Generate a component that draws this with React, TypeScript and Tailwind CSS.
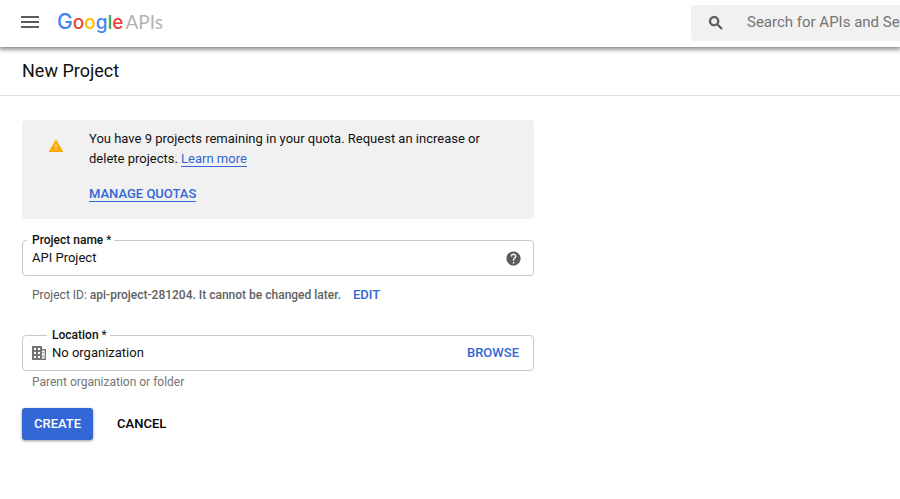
import type { ReactNode } from "react";

const LOGO_LETTERS = [
  { char: "G", color: "text-[21px] text-[#4285f4]" },
  { char: "o", color: "text-[#ea4335]" },
  { char: "o", color: "text-[#fbbc05]" },
  { char: "g", color: "text-[#4285f4]" },
  { char: "l", color: "text-[#34a853]" },
  { char: "e", color: "text-[#ea4335]" },
];

function Icon({ d, className }: { d: string; className: string }) {
  return (
    <svg viewBox="0 0 24 24" fill="currentColor" className={className} aria-hidden="true">
      <path d={d} />
    </svg>
  );
}

function BuildingIcon() {
  return (
    <svg viewBox="0 0 14 14" fill="currentColor" fillRule="evenodd" className="mr-[6px] h-[14px] w-[14px] shrink-0 text-[#757575]" aria-hidden="true">
      <path d="M0 0h10v3h4v11H0V0zM2 2v2h2V2H2zm4 0v2h2V2H6zM2 6v2h2V6H2zm4 0v2h2V6H6zM2 10v2h2v-2H2zm4 0v2h2v-2H6zM10 4.5v8h2.7v-8H10z" />
      <path d="M10.5 6h1.2v1.6h-1.2zM10.5 9.4h1.2V11h-1.2z" />
    </svg>
  );
}

function Header() {
  return (
    <header className="relative flex h-[47px] items-center bg-white pb-[3px] shadow-[0_1px_5px_1px_rgba(0,0,0,0.55)]">
      <button type="button" aria-label="Main menu" className="ml-[18px] shrink-0">
        <Icon className="h-6 w-6 text-[#5f5b5b]" d="M3 18h18v-2H3v2zm0-5h18v-2H3v2zm0-7v2h18V6H3z" />
      </button>
      <a href="#" className="ml-[15px] flex shrink-0 items-baseline gap-[2px] font-['Inter',sans-serif] text-[19px] leading-6">
        <span className="font-medium">
          {LOGO_LETTERS.map((l, i) => (
            <span key={i} className={l.color}>{l.char}</span>
          ))}
        </span>
        <span className="font-['Lato',sans-serif] text-[#b3b3b3]">APIs</span>
      </a>
      <div className="mt-[2px] ml-auto flex h-9 w-[209px] items-center rounded-l-sm bg-[#f1f1f1] pl-4">
        <Icon
          className="h-[18px] w-[18px] shrink-0 stroke-current text-[#555]"
          d="M15.5 14h-.79l-.28-.27C15.41 12.59 16 11.11 16 9.5 16 5.91 13.09 3 9.5 3S3 5.91 3 9.5 5.91 16 9.5 16c1.61 0 3.09-.59 4.23-1.57l.27.28v.79l5 4.99L20.49 19l-4.99-5zm-6 0C7.01 14 5 11.99 5 9.5S7.01 5 9.5 5 14 7.01 14 9.5 11.99 14 9.5 14z"
        />
        <input
          type="text"
          aria-label="Search for APIs and Services"
          placeholder="Search for APIs and Services"
          className="ml-[22px] min-w-0 flex-1 bg-transparent pb-[2px] text-[15px] outline-none placeholder:text-[#757575]"
        />
      </div>
    </header>
  );
}

function QuotaNotice() {
  return (
    <section className="flex rounded bg-[#f1f1f1] pt-[9px] pr-8 pb-[15px] pl-[26px]">
      <Icon className="mt-[9px] h-4 w-4 shrink-0 text-[#f9ab00]" d="M1 21h22L12 2 1 21zm12-3h-2v-2h2v2zm0-4h-2v-4h2v4z" />
      <div className="ml-[25px] text-[13px] leading-5">
        <p>
          You have 9 projects remaining in your quota. Request an increase or delete projects.{" "}
          <a href="#" className="inline-block border-b border-[#3367d6] leading-[14px] text-[#3367d6]">Learn more</a>
        </p>
        <p className="mt-[15px]">
          <a href="#" className="inline-block border-b border-[#3367d6] leading-[14px] font-medium text-[#3367d6]">MANAGE QUOTAS</a>
        </p>
      </div>
    </section>
  );
}

interface FieldProps {
  id: string;
  label: string;
  value: string;
  legendClass: string;
  icon?: ReactNode;
  action: ReactNode;
}

// Outlined text field, the label sits in the notch of the border
function Field({ id, label, value, legendClass, icon, action }: FieldProps) {
  return (
    <fieldset className="min-w-0 rounded border border-[#c8c8c8] pr-[11px] pb-[7px] pl-[9px]">
      <legend className={`pr-[3px] pl-[5px] text-xs leading-4 ${legendClass}`}>
        <label htmlFor={id}>
          <span className="font-medium">{label}</span> *
        </label>
      </legend>
      <div className="flex h-5 items-center">
        {icon}
        <input id={id} defaultValue={value} className="h-[18px] min-w-0 flex-1 bg-transparent text-[13px] outline-none" />
        {action}
      </div>
    </fieldset>
  );
}

export default function App() {
  return (
    <div className="min-h-screen bg-white font-['Roboto',sans-serif] text-[#111]">
      <Header />
      <div className="border-b border-[#dedede] px-[22px] pt-3 pb-3">
        <h1 className="text-lg leading-6">New Project</h1>
      </div>
      <main className="max-w-[556px] px-[22px] pt-6">
        <QuotaNotice />

        <form className="mt-[13px]" onSubmit={(e) => e.preventDefault()}>
          <Field
            id="project-name"
            label="Project name"
            value="API Project"
            legendClass="-ml-[5px]"
            action={
              <button type="button" aria-label="Help">
                <Icon
                  className="h-[17px] w-[17px] text-[#5f5b5b]"
                  d="M12 2C6.48 2 2 6.48 2 12s4.48 10 10 10 10-4.48 10-10S17.52 2 12 2zm1 17h-2v-2h2v2zm2.07-7.75l-.9.92C13.45 12.9 13 13.5 13 15h-2v-.5c0-1.1.45-2.1 1.17-2.83l1.24-1.26c.37-.36.59-.86.59-1.41 0-1.1-.9-2-2-2s-2 .9-2 2H8c0-2.21 1.79-4 4-4s4 1.79 4 4c0 .88-.36 1.68-.93 2.25z"
                />
              </button>
            }
          />
          <p className="mt-[11px] mb-6 flex items-center pl-[10px] text-xs leading-4 text-[#616161]">
            <span>
              Project ID: <span className="font-medium">api-project-281204. It cannot be changed later.</span>
            </span>
            <button type="button" className="ml-3 text-[13px] leading-4 font-medium text-[#3367d6]">EDIT</button>
          </p>

          <Field
            id="location"
            label="Location"
            value="No organization"
            legendClass="ml-[15px]"
            icon={<BuildingIcon />}
            action={<button type="button" className="mr-[3px] text-[13px] font-medium text-[#3367d6]">BROWSE</button>}
          />
          <p className="mt-[3px] pl-[10px] text-xs leading-4 text-[#757575]">Parent organization or folder</p>

          <div className="mt-[18px] flex text-[13px]">
            <button type="submit" className="h-8 rounded-[3px] bg-[#3367d6] px-3 font-medium text-white shadow-[0_1px_3px_rgba(0,0,0,0.4)]">
              CREATE
            </button>
            <button type="button" className="ml-3 h-8 px-3 font-medium text-black">CANCEL</button>
          </div>
        </form>
      </main>
    </div>
  );
}
